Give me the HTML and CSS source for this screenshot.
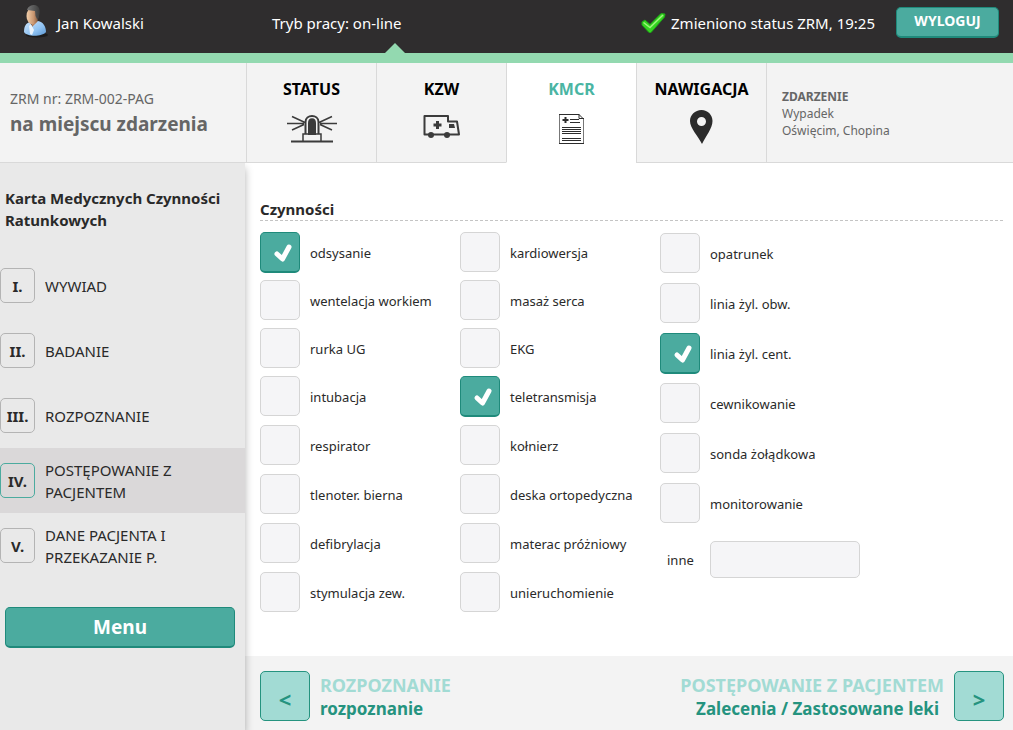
FILE: index.html
```html
<!DOCTYPE html>
<html lang="pl">
<head>
<meta charset="utf-8">
<title>Karta Medycznych Czynności Ratunkowych</title>
<link rel="stylesheet" href="styles.css">
</head>
<body>
<header class="topbar">
  <div class="user">
    <svg class="avatar" width="28" height="34" viewBox="0 0 28 34" aria-hidden="true">
      <defs>
        <linearGradient id="skin" x1="0" x2="1"><stop offset="0" stop-color="#f3cfaa"/><stop offset=".6" stop-color="#c99670"/><stop offset="1" stop-color="#7c5238"/></linearGradient>
        <linearGradient id="shirt" x1="0" y1="0" x2="1" y2="1"><stop offset="0" stop-color="#cfe5fb"/><stop offset=".6" stop-color="#8fc2f2"/><stop offset="1" stop-color="#5b95d0"/></linearGradient>
        <linearGradient id="hair" x1="0" x2="1"><stop offset="0" stop-color="#777"/><stop offset="1" stop-color="#3c3c3c"/></linearGradient>
      </defs>
      <ellipse cx="15" cy="31" rx="11" ry="2.500" fill="#1c1b1b"/>
      <path d="M9 17L15 16L17 20L11 25Z" fill="#b9805a"/>
      <path d="M2 28C2 22 4 19 8 18L10 23L16 17C21 18 24 22 24 28C20 33 5 33 2 28Z" fill="url(#shirt)"/>
      <path d="M7 22L9 20L12 26L10 31L8 30Z" fill="#eaf3fc"/>
      <ellipse cx="10.500" cy="12" rx="6" ry="8.500" fill="url(#skin)"/>
      <path d="M5 6C6 2 10 1 12 1C17 1 19 6 17 12L15.500 16L13.500 12L13 7Z" fill="url(#hair)"/>
    </svg>
    <span>Jan Kowalski</span>
  </div>
  <div class="mode">Tryb pracy: on-line</div>
  <div class="notice">
    <svg width="26" height="22" viewBox="0 0 26 22" aria-hidden="true">
      <path d="M1 10L4 8L9 12.500L20 1.500L24 2L23.500 5L10 20.500H8L1 13Z" fill="#35d321" stroke="#1fa517" stroke-width="1" stroke-linejoin="round"/>
      <path d="M2.500 10.500L9 15.500L22 3" fill="none" stroke="#9df57c" stroke-width="1.500"/>
    </svg>
    <span>Zmieniono status ZRM, 19:25</span>
  </div>
  <button class="btn logout" type="button">WYLOGUJ</button>
</header>

<nav class="tabs">
  <div class="unit">
    <span class="unit-id">ZRM nr: ZRM-002-PAG</span>
    <strong class="unit-state">na miejscu zdarzenia</strong>
  </div>
  <a class="tab" href="#status"><span>STATUS</span>
    <svg width="52" height="40" viewBox="0 0 52 40" fill="none" stroke="#3b3b3b" stroke-width="2" aria-hidden="true">
      <path d="M5 34.500H47"/>
      <path d="M17 34V27H35V34" stroke-width="1.500"/>
      <path d="M19.500 27V15C19.500 7 32.500 7 32.500 15V27"/>
      <path d="M23 27V16C23 11 29 11 29 16V27Z" fill="#3b3b3b"/>
      <path d="M1 16.500H18M6 9.500L19 15.500M6 23L18 17.500M34 16.500H51M46 9.500L33 15.500M46 23L34 17.500" stroke-width="1.500"/>
    </svg>
  </a>
  <a class="tab" href="#kzw"><span>KZW</span>
    <svg width="52" height="40" viewBox="0 0 52 40" fill="none" stroke="#3b3b3b" stroke-width="2" aria-hidden="true">
      <path d="M8.500 9H32V14.500H41L43 27.500H8.500Z" stroke-linejoin="round"/>
      <path d="M21.500 14V22M17.500 18H25.500" stroke-width="3"/>
      <path d="M33 17H38L39 21H33Z" fill="#3b3b3b" stroke="none"/>
      <circle cx="15" cy="28" r="3" fill="#3b3b3b" stroke="none"/>
      <circle cx="31" cy="28" r="3" fill="#3b3b3b" stroke="none"/>
    </svg>
  </a>
  <a class="tab tab-active" href="#kmcr" aria-current="page"><span>KMCR</span>
    <svg width="52" height="40" viewBox="0 0 52 40" fill="none" stroke="#2d2d2d" aria-hidden="true">
      <path d="M13.500 7V36M37.500 11V36" stroke="#777"/>
      <path d="M13 7.500H33L37.500 12M13 36.500H38M33 7V11.500H38"/>
      <path d="M19.500 10V16M16.500 13H22.500" stroke-width="2"/>
      <path d="M24 12.500H33M24 15.500H34M16 20.500H35M16 22.500H35M16 24.500H35M16 26.500H35M16 31.500H35M16 33.500H35"/>
    </svg>
  </a>
  <a class="tab" href="#nawigacja"><span>NAWIGACJA</span>
    <svg width="52" height="40" viewBox="0 0 52 40" aria-hidden="true">
      <path fill="#2b2b2b" fill-rule="evenodd" d="M25.500 3C32 3 36.500 8 36.500 14C36.500 21 30 29 26 37C22 29 14 21 14 14C14 8 19 3 25.500 3ZM25.500 10A4.500 4.500 0 1 0 25.500 19A4.500 4.500 0 1 0 25.500 10Z"/>
    </svg>
  </a>
  <div class="incident">
    <strong>ZDARZENIE</strong>
    <span>Wypadek</span>
    <span>Oświęcim, Chopina</span>
  </div>
</nav>

<div class="layout">
  <aside class="sidebar">
    <h1 class="card-title">Karta Medycznych Czynności Ratunkowych</h1>
    <nav class="steps">
      <a class="step" href="#s1"><b class="step-no">I.</b><span>WYWIAD</span></a>
      <a class="step" href="#s2"><b class="step-no">II.</b><span>BADANIE</span></a>
      <a class="step" href="#s3"><b class="step-no">III.</b><span>ROZPOZNANIE</span></a>
      <a class="step step-active" href="#s4" aria-current="step"><b class="step-no">IV.</b><span>POSTĘPOWANIE Z PACJENTEM</span></a>
      <a class="step" href="#s5"><b class="step-no">V.</b><span>DANE PACJENTA I PRZEKAZANIE P.</span></a>
    </nav>
    <button class="btn menu" type="button">Menu</button>
  </aside>

  <main class="content">
    <section class="actions">
      <h2 class="section-title">Czynności</h2>
      <div class="columns">
        <div class="column">
          <label class="option"><span class="box"><input type="checkbox" checked><svg class="tick" viewBox="0 0 40 41" aria-hidden="true"><path d="M17 22L22.500 27L29 15"/></svg></span>odsysanie</label>
          <label class="option"><span class="box"><input type="checkbox"></span>wentelacja workiem</label>
          <label class="option"><span class="box"><input type="checkbox"></span>rurka UG</label>
          <label class="option"><span class="box"><input type="checkbox"></span>intubacja</label>
          <label class="option"><span class="box"><input type="checkbox"></span>respirator</label>
          <label class="option"><span class="box"><input type="checkbox"></span>tlenoter. bierna</label>
          <label class="option"><span class="box"><input type="checkbox"></span>defibrylacja</label>
          <label class="option"><span class="box"><input type="checkbox"></span>stymulacja zew.</label>
        </div>
        <div class="column">
          <label class="option"><span class="box"><input type="checkbox"></span>kardiowersja</label>
          <label class="option"><span class="box"><input type="checkbox"></span>masaż serca</label>
          <label class="option"><span class="box"><input type="checkbox"></span>EKG</label>
          <label class="option"><span class="box"><input type="checkbox" checked><svg class="tick" viewBox="0 0 40 41" aria-hidden="true"><path d="M17 22L22.500 27L29 15"/></svg></span>teletransmisja</label>
          <label class="option"><span class="box"><input type="checkbox"></span>kołnierz</label>
          <label class="option"><span class="box"><input type="checkbox"></span>deska ortopedyczna</label>
          <label class="option"><span class="box"><input type="checkbox"></span>materac próżniowy</label>
          <label class="option"><span class="box"><input type="checkbox"></span>unieruchomienie</label>
        </div>
        <div class="column column-wide">
          <label class="option"><span class="box"><input type="checkbox"></span>opatrunek</label>
          <label class="option"><span class="box"><input type="checkbox"></span>linia żyl. obw.</label>
          <label class="option"><span class="box"><input type="checkbox" checked><svg class="tick" viewBox="0 0 40 41" aria-hidden="true"><path d="M17 22L22.500 27L29 15"/></svg></span>linia żyl. cent.</label>
          <label class="option"><span class="box"><input type="checkbox"></span>cewnikowanie</label>
          <label class="option"><span class="box"><input type="checkbox"></span>sonda żołądkowa</label>
          <label class="option"><span class="box"><input type="checkbox"></span>monitorowanie</label>
          <div class="other"><label for="other">inne</label><input id="other" type="text"></div>
        </div>
      </div>
    </section>
    <footer class="pager">
      <a class="page-link" href="#prev"><span class="arrow">&lt;</span><span class="page-text"><span class="page-group">ROZPOZNANIE</span><span>rozpoznanie</span></span></a>
      <a class="page-link page-next" href="#next"><span class="page-text"><span class="page-group">POSTĘPOWANIE Z PACJENTEM</span><span class="page-name">Zalecenia / Zastosowane leki</span></span><span class="arrow">&gt;</span></a>
    </footer>
  </main>
</div>
</body>
</html>
```
FILE: styles.css
```css
* { box-sizing: border-box; }

body {
  margin: 0;
  min-height: 100vh;
  display: flex;
  flex-direction: column;
  background: #fff;
  color: #2a2a2a;
  font: 13px/18px "Noto Sans", "Open Sans", sans-serif;
}

a { color: inherit; text-decoration: none; }
button, input { font-family: inherit; margin: 0; }
svg { display: block; }

.topbar {
  position: relative;
  display: grid;
  grid-template-columns: 250px 1fr auto auto;
  align-items: center;
  height: 63px;
  padding: 0 14px 8px 22px;
  background: #2f2d2e;
  border-bottom: 10px solid #93d9b0;
  color: #fff;
  font-size: 15px;
}
.topbar::after {
  content: "";
  position: absolute;
  left: 385px;
  bottom: 0;
  border: 10px solid transparent;
  border-top-width: 0;
  border-bottom-color: #93d9b0;
}
.user { display: flex; align-items: center; gap: 7px; }
.user .avatar { margin-bottom: 4px; }
.notice { display: flex; align-items: center; gap: 4px; }

.btn {
  border: 1px solid #1f8a7b;
  border-bottom-width: 2px;
  border-radius: 5px;
  background: #4bab9f;
  color: #fff;
  font-weight: 700;
  cursor: pointer;
}
.logout { width: 103px; height: 31px; margin-left: 21px; padding: 0 0 4px; font-size: 14px; }
.menu { height: 41px; margin: 29px 10px 0 5px; font-size: 19px; }

.tabs {
  display: flex;
  height: 100px;
  background: #f3f3f3;
  color: #666;
}
.unit, .incident, .tab {
  display: flex;
  flex-direction: column;
  border-bottom: 1px solid #d9d9d9;
}
.unit { width: 246px; padding: 27px 10px 0; font-size: 14px; }
.unit-state { font-size: 19px; line-height: 32px; }
.tab {
  width: 130px;
  align-items: center;
  gap: 7px;
  padding-top: 15px;
  border-left: 1px solid #d9d9d9;
  color: #000;
  font-size: 16px;
  line-height: 22px;
  font-weight: 700;
}
.tab-active { background: #fff; border-bottom-color: #fff; color: #4ab5a3; }
.incident {
  flex: 1;
  padding: 25px 15px 0;
  border-left: 1px solid #d9d9d9;
  font-size: 12px;
  line-height: 17px;
}

.layout { flex: 1; display: flex; }
.sidebar {
  display: flex;
  flex-direction: column;
  width: 245px;
  background: #e9e9e9;
  box-shadow: 0 5px 8px rgba(0, 0, 0, .3);
  clip-path: inset(0 -12px 0 0);
  z-index: 1;
}
.card-title {
  margin: 24px 0 22px;
  padding: 0 5px;
  font-size: 15px;
  line-height: 22px;
}
.steps { display: flex; flex-direction: column; }
.step {
  display: flex;
  align-items: center;
  gap: 10px;
  height: 65px;
  padding-right: 40px;
  font-size: 15px;
  line-height: 22px;
}
.step-active { background: #dad8d9; }
.step-no {
  flex: none;
  width: 35px;
  height: 35px;
  border: 1px solid #b4b4b4;
  border-radius: 5px;
  line-height: 35px;
  text-align: center;
}
.step-active .step-no { border-color: #4bab9f; }

.content { flex: 1; display: flex; flex-direction: column; }
.actions { flex: 1; padding: 36px 10px 20px 15px; }
.section-title {
  margin: 0 0 11px;
  border-bottom: 1px dashed #c4c4c4;
  font-size: 15px;
  line-height: 21px;
}
.columns { display: grid; grid-template-columns: 200px 200px 1fr; }
.column {
  display: grid;
  grid-template-rows: repeat(3, 48px) repeat(4, 49px) 40px;
  align-items: start;
}
.column-wide {
  grid-template-rows: repeat(6, 50px) 53px;
  align-content: start;
  padding-top: 1px;
}
.option { display: flex; align-items: center; gap: 10px; height: 41px; }
.box { display: grid; width: 40px; height: 41px; }
.box > * { grid-area: 1 / 1; }
.box input, .other input {
  appearance: none;
  border: 1px solid #d5d5d5;
  border-radius: 5px;
  background: #f5f5f7;
}
.box input { width: 40px; height: 40px; }
.box input:checked {
  height: 41px;
  border-color: #1f8a7b;
  border-bottom-width: 2px;
  background: #4bab9f;
}
.tick {
  width: 40px;
  height: 41px;
  fill: none;
  stroke: #fff;
  stroke-width: 5;
  stroke-linecap: round;
  stroke-linejoin: round;
  pointer-events: none;
}
.other { display: flex; align-items: center; padding: 8px 0 0 7px; }
.other label { width: 43px; }
.other input { width: 150px; height: 37px; padding: 0 8px; font-size: 13px; }

.pager {
  display: flex;
  justify-content: space-between;
  height: 74px;
  padding: 15px 9px 0 15px;
  background: #f3f3f3;
}
.page-link {
  display: flex;
  align-items: flex-start;
  gap: 10px;
  color: #25937f;
  font-size: 17px;
  font-weight: 700;
  line-height: 24px;
}
.page-text { display: flex; flex-direction: column; padding-top: 2px; }
.page-next { text-align: right; }
.page-name { padding-right: 5px; }
.page-group { color: #a2dbd4; font-size: 18px; }
.arrow {
  width: 50px;
  height: 50px;
  border: 1px solid #25937f;
  border-radius: 5px;
  background: #a2dbd4;
  font-size: 22px;
  line-height: 54px;
  text-align: center;
}
```
